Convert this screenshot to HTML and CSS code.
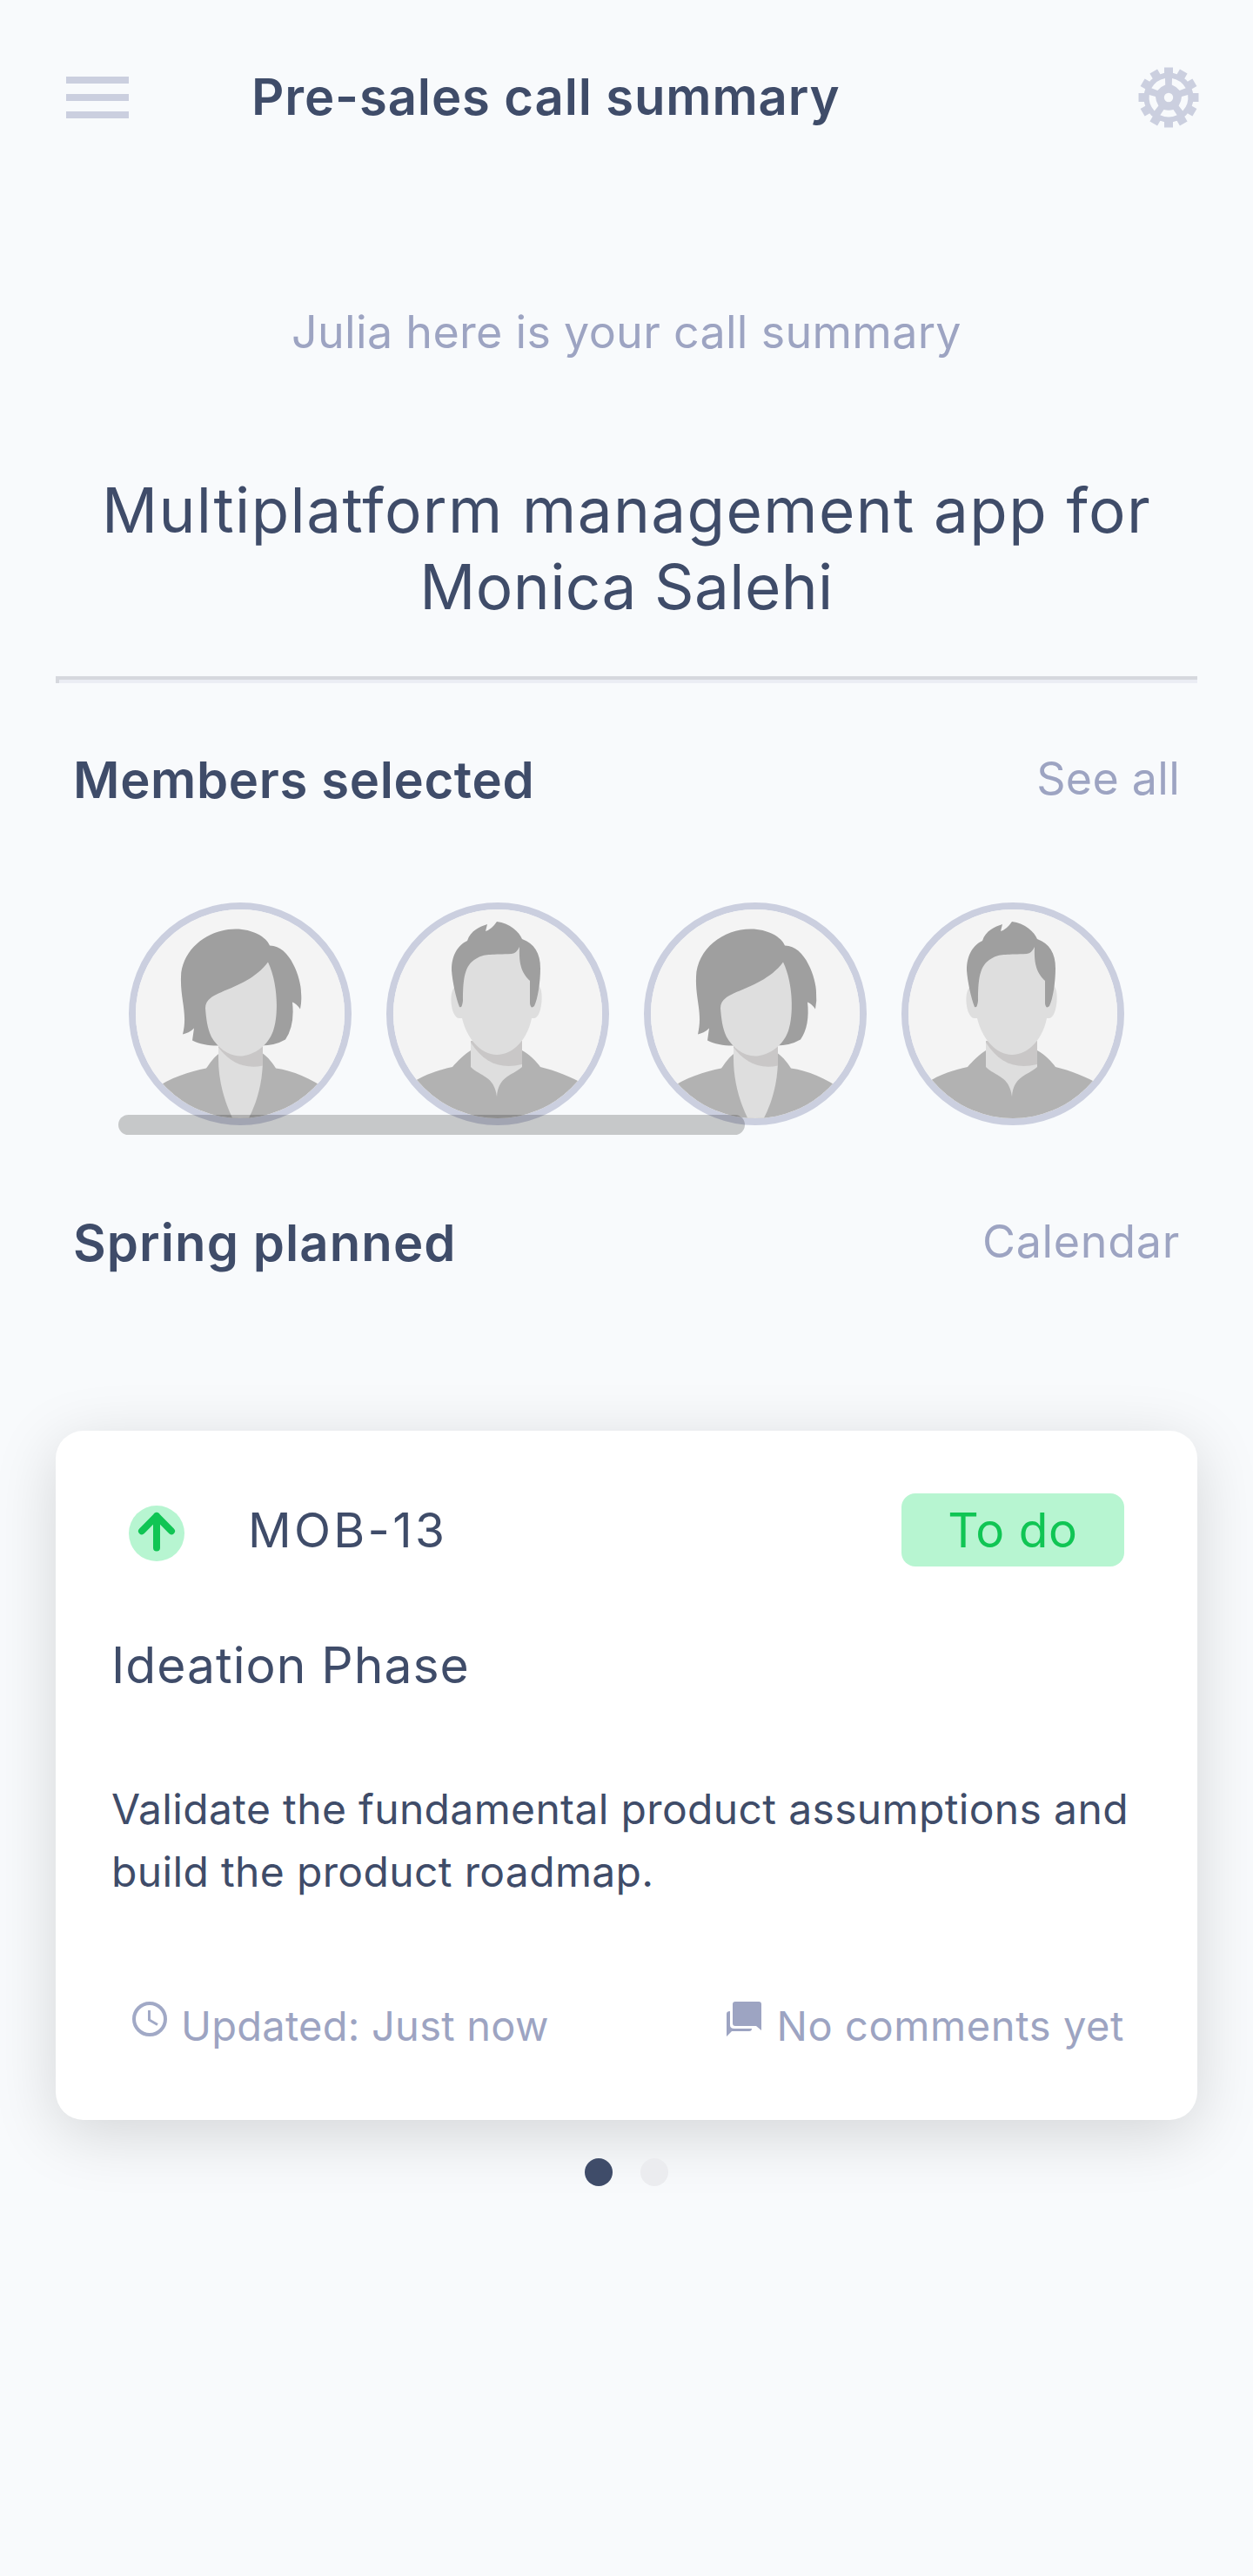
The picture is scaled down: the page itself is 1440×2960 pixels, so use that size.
FILE: index.html
```html
<!DOCTYPE html>
<html lang="en">
<head>
<meta charset="utf-8">
<title>Pre-sales call summary</title>
<link rel="stylesheet" href="styles.css">
</head>
<body>
<svg class="defs" width="0" height="0" aria-hidden="true">
  <symbol id="woman" viewBox="0 0 240 240">
    <rect width="240" height="240" fill="#f4f4f4"/>
    <g transform="translate(0 -4.5)">
    <path d="M20 212C40 197 62 191 81 187C86 180 91 173 96 170H146C152 174 158 182 161 187C181 190 200 198 222 213V250H20Z" fill="#b2b2b2"/>
    <path d="M95 156H146V176C146 204 139 227 129 246H112C101 224 95 200 95 176Z" fill="#dedede"/>
    <path d="M95 161H146V184C123 189 106 178 95 163Z" fill="#c9c7c7"/>
    <path d="M94 161C83 161 73 159 65 155L67 141C63 145 58 147 54 148C60 124 51 108 52 82C53 50 83 27 115 27C134 27 150 36 154 46C178 46 190 85 190 100Q191 110 189 119Q185 113 180 111Q183 138 172 154Q160 161 144 161Z" fill="#9f9f9f"/>
    <path d="M152 65C164 90 164 127 158 144C151 164 132 173 120 173C106 173 94 163 87 151C82 140 81 130 80 118C80 108 89 104 95 101C116 92 138 84 152 65Z" fill="#dedede"/>
    </g>
  </symbol>
  <symbol id="man" viewBox="0 0 240 240">
    <rect width="240" height="240" fill="#f4f4f4"/>
    <path d="M20 200C36 189 54 184 68 181C74 174 82 166 89 162H148C156 166 164 174 169 181C186 185 203 192 222 202V240H20Z" fill="#b2b2b2"/>
    <path d="M89 151H148V181C137 191 121 191 119 215C116 191 100 192 89 181Z" fill="#dedede"/>
    <path d="M89 151H148V178C122 184 104 176 89 153Z" fill="#c9c7c7"/>
    <path d="M71 89C63 94 66 125 76 125H79C84 147 100 167 119 167C139 167 155 147 159 125H162C171 124 173 94 168 89L150 36H88Z" fill="#dedede"/>
    <path d="M76 112C72 102 68 83 67 70C67 51 75 41 85 36C89 24 99 20 108 17L106 25Q113 23 119 14C134 16 145 26 148 34C162 39 169 50 169 68C169 84 166 103 162 111Q158 115 157 108V82C149 74 144 66 145 43Q142 50 136 51C114 52 106 51 98 55C83 62 80 75 80 105Q79 114 76 112Z" fill="#9f9f9f"/>
  </symbol>
</svg>

<header class="topbar">
  <button class="menu" aria-label="Menu"><span></span><span></span><span></span></button>
  <h1 class="topbar-title">Pre-sales call summary</h1>
  <svg class="gear" viewBox="0 0 70 70" aria-label="Settings">
    <g fill="#cbcfdf">
      <rect x="30" y="0.5" width="10" height="69"/>
      <rect x="30" y="0.5" width="10" height="69" transform="rotate(30 35 35)"/>
      <rect x="30" y="0.5" width="10" height="69" transform="rotate(60 35 35)"/>
      <rect x="30" y="0.5" width="10" height="69" transform="rotate(90 35 35)"/>
      <rect x="30" y="0.5" width="10" height="69" transform="rotate(120 35 35)"/>
      <rect x="30" y="0.5" width="10" height="69" transform="rotate(150 35 35)"/>
      <circle cx="35" cy="35" r="28.5"/>
    </g>
    <g fill="#f8fafc">
      <circle cx="35" cy="35" r="5.2"/>
      <path id="slot" d="M25.300 55.200A22.400 22.400 0 0 0 44.700 55.200L40.500 49Q35 50.500 29.500 49Z"/>
      <use href="#slot" transform="rotate(72 35 35)"/>
      <use href="#slot" transform="rotate(144 35 35)"/>
      <use href="#slot" transform="rotate(216 35 35)"/>
      <use href="#slot" transform="rotate(288 35 35)"/>
    </g>
  </svg>
</header>

<main class="page">
  <p class="greeting">Julia here is your call summary</p>
  <h2 class="project"><span class="project-name">Multiplatform management app for</span><br><span class="project-client">Monica Salehi</span></h2>
  <hr class="rule">

  <section class="section-head members-head">
    <h3 class="members-title">Members selected</h3><a class="see-all">See all</a>
  </section>
  <div class="members">
    <svg class="avatar"><use href="#woman"/></svg>
    <svg class="avatar"><use href="#man"/></svg>
    <svg class="avatar"><use href="#woman"/></svg>
    <svg class="avatar"><use href="#man"/></svg>
    <div class="scrollbar"></div>
  </div>

  <section class="section-head spring-head">
    <h3 class="spring-title">Spring planned</h3><a class="calendar">Calendar</a>
  </section>

  <article class="card">
    <div class="card-top">
      <svg class="up" viewBox="0 0 64 64"><circle cx="32" cy="32" r="32" fill="#b7f5d1"/><path d="M32 48.400V12M15 29.300L32 12L49 29.300" fill="none" stroke="#10c554" stroke-width="8" stroke-linecap="round" stroke-linejoin="round"/></svg>
      <span class="ticket">MOB-13</span>
      <span class="status">To do</span>
    </div>
    <h4 class="phase">Ideation Phase</h4>
    <p class="desc">Validate the fundamental product assumptions and<br>build the product roadmap.</p>
    <div class="card-foot">
      <svg class="clock" viewBox="0 0 40 40" fill="none" stroke="#a1a9c6"><circle cx="20" cy="20" r="18" stroke-width="4"/><path d="M19.500 10V21L29 26.500" stroke-width="3"/></svg>
      <span class="updated">Updated: Just now</span>
      <svg class="chat" viewBox="0 0 40 40" fill="#9da4c2"><path d="M10 0H37Q40 0 40 3V33L34 28H10Q7 28 7 25V3Q7 0 10 0Z"/><path d="M4 11V27Q4 31 9 31H29Q29 34 26 34H6L0 40V14Q0 11 4 11Z"/></svg>
      <span class="comments">No comments yet</span>
    </div>
  </article>
  <nav class="dots"><i class="dot active"></i><i class="dot"></i></nav>
</main>
</body>
</html>
```
FILE: styles.css
```css
* { box-sizing: border-box; margin: 0; padding: 0; }
body { width: 1440px; height: 2960px; background: #f8fafc; color: #3f4c69; font-family: "Inter", "Liberation Sans", sans-serif; overflow: hidden; }
.defs { display: block; width: 0; height: 0; }
h1, h2, h3, h4 { font-weight: 400; white-space: nowrap; }
span, a { white-space: nowrap; }

.topbar { display: flex; align-items: center; height: 224px; padding: 0 62px 0 76px; }
.menu { display: flex; flex-direction: column; gap: 12px; width: 72px; border: 0; background: none; }
.menu span { height: 8px; background: #cbcfdf; }
.topbar-title { margin: 0 0 2px 141px; font-size: 58px; font-weight: 600; line-height: 72px; letter-spacing: .87px; }
.gear { width: 70px; height: 70px; margin-left: auto; margin-bottom: 1px; }

.page { display: flex; flex-direction: column; padding: 0 64px; }
.greeting { margin-top: 124px; text-align: center; font-size: 52px; line-height: 68px; letter-spacing: .3px; color: #9da4c2; }
.project { margin-top: 126px; text-align: center; font-size: 71px; line-height: 88px; }
.project-name { letter-spacing: 1.4px; }
.project-client { letter-spacing: .4px; }
.rule { height: 8px; margin-top: 59px; border: 0; border-top: 4px solid #d6d8de; border-left: 4px solid #d6d8de; background: #ebedf4; }

.section-head { display: flex; justify-content: space-between; align-items: center; height: 80px; padding: 0 20px; color: #9da4c2; font-size: 52px; }
.section-head h3 { font-size: 58px; font-weight: 600; color: #3f4c69; }
.section-head a { margin-bottom: 3px; }
.members-head { margin-top: 71px; }
.members-title { letter-spacing: .65px; }
.see-all { letter-spacing: .25px; }
.members { display: flex; gap: 40px; position: relative; margin-top: 101px; padding: 0 84px; }
.avatar { width: 256px; height: 256px; border: 8px solid #cbcfdf; border-radius: 50%; }
.scrollbar { position: absolute; left: 72px; top: 244px; width: 720px; height: 23px; border-radius: 12px; background: rgba(0, 0, 0, .2); }
.spring-head { margin-top: 95px; }
.spring-title { letter-spacing: 1.1px; }
.calendar { letter-spacing: .7px; }

.card { height: 792px; margin-top: 176px; padding: 72px 64px 0; border-radius: 32px; background: #fff; box-shadow: 0 16px 72px rgba(0, 0, 0, .15); }
.card-top { display: flex; align-items: center; height: 84px; padding: 0 20px; font-size: 55px; }
.up { width: 64px; height: 64px; margin-top: 8px; }
.ticket { margin-left: 73px; letter-spacing: 3.3px; }
.status { display: flex; align-items: center; justify-content: center; width: 256px; height: 84px; margin-left: auto; border-radius: 16px; background: #b7f5d1; color: #10c554; letter-spacing: .6px; }
.phase { margin-top: 76px; font-size: 57px; line-height: 76px; letter-spacing: 1px; }
.desc { margin-top: 91px; font-size: 48px; line-height: 72px; letter-spacing: .35px; white-space: nowrap; }
.card-foot { display: flex; align-items: center; height: 64px; margin-top: 108px; padding: 0 20px 0 24px; color: #9da4c2; font-size: 47px; }
.clock, .chat { width: 40px; height: 40px; margin-bottom: 14px; }
.updated { margin-left: 16px; letter-spacing: .25px; }
.chat { margin-left: auto; }
.comments { margin-left: 17px; letter-spacing: .6px; }
.dots { display: flex; justify-content: center; gap: 32px; margin-top: 44px; }
.dot { width: 32px; height: 32px; border-radius: 50%; background: #ebecef; }
.dot.active { background: #3f4c69; }
```
